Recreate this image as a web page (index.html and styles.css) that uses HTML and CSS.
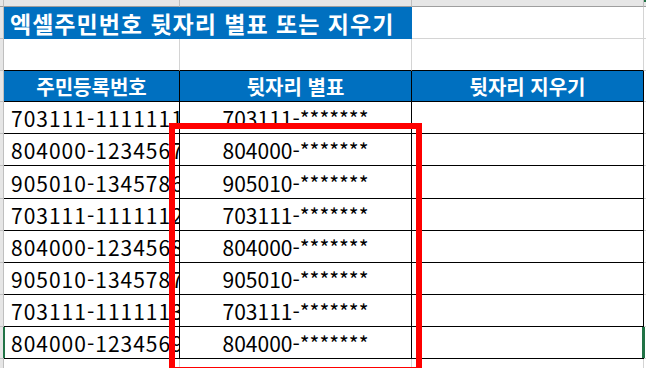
FILE: index.html
```html
<!DOCTYPE html>
<html lang="ko">
<head>
<meta charset="utf-8">
<title>엑셀주민번호 뒷자리 별표 또는 지우기</title>
<link rel="stylesheet" href="styles.css">
</head>
<body>
<div class="sheet">
  <div class="row colhead">
    <div class="rh"></div><div class="c"></div><div class="c"></div><div class="c"></div><div class="c edge"></div>
  </div>
  <div class="row title-row">
    <div class="rh"></div>
    <div class="c title">엑셀주민번호 뒷자리 별표 또는 지우기</div>
    <div class="c"></div><div class="c end"></div>
  </div>
  <div class="row blank">
    <div class="rh"></div><div class="c tb"></div><div class="c tb"></div><div class="c tb"></div><div class="c end"></div>
  </div>
  <div class="row head">
    <div class="rh"></div>
    <div class="c th">주민등록번호</div>
    <div class="c th">뒷자리 별표</div>
    <div class="c th">뒷자리 지우기</div>
    <div class="c end"></div>
  </div>
  <div class="row data"><div class="rh"></div><div class="c td id">703111-1111111</div><div class="c td mask">703111-*******</div><div class="c td"></div><div class="c end"></div></div>
  <div class="row data"><div class="rh"></div><div class="c td id">804000-1234567</div><div class="c td mask">804000-*******</div><div class="c td"></div><div class="c end"></div></div>
  <div class="row data tall"><div class="rh"></div><div class="c td id">905010-1345786</div><div class="c td mask">905010-*******</div><div class="c td"></div><div class="c end"></div></div>
  <div class="row data"><div class="rh"></div><div class="c td id">703111-1111112</div><div class="c td mask">703111-*******</div><div class="c td"></div><div class="c end"></div></div>
  <div class="row data"><div class="rh"></div><div class="c td id">804000-1234568</div><div class="c td mask">804000-*******</div><div class="c td"></div><div class="c end"></div></div>
  <div class="row data"><div class="rh"></div><div class="c td id">905010-1345787</div><div class="c td mask">905010-*******</div><div class="c td"></div><div class="c end"></div></div>
  <div class="row data"><div class="rh"></div><div class="c td id">703111-1111113</div><div class="c td mask">703111-*******</div><div class="c td"></div><div class="c end"></div></div>
  <div class="row data sel"><div class="rh"></div><div class="c td id">804000-1234569</div><div class="c td mask">804000-*******</div><div class="c td"></div><div class="c end"></div></div>
  <div class="row blank tail">
    <div class="rh"></div><div class="c"></div><div class="c"></div><div class="c"></div><div class="c end"></div>
  </div>
  <div class="highlight"></div>
</div>
</body>
</html>
```
FILE: styles.css
```css
* { box-sizing: border-box; }
html, body { margin: 0; padding: 0; background: #fff; }
body {
  width: 646px;
  height: 368px;
  overflow: hidden;
  font-family: "Noto Sans CJK KR", "Noto Sans", sans-serif;
  color: #000;
}
.sheet { position: relative; width: 646px; height: 368px; }
.row {
  display: grid;
  grid-template-columns: 4px 176px 232px 232px 2px;
  height: 32px;
}
.c {
  border-right: 1px solid #d4d4d4;
  border-bottom: 1px solid #d4d4d4;
  overflow: hidden;
  white-space: nowrap;
  display: flex;
  align-items: center;
  line-height: 1;
}
.c.end { border-right: none; }
.rh {
  background: #e6e6e6;
  border-right: 1px solid #bfbfbf;
  border-bottom: 1px solid #bfbfbf;
}

/* column header strip */
.colhead { height: 7px; }
.colhead .c { background: #e6e6e6; border-bottom: 1px solid #9e9e9e; border-right: 1px solid #bfbfbf; }
.colhead .rh { border-bottom: 1px solid #9e9e9e; }
.colhead .edge { border-right: none; border-top: 2px solid #217346; }

/* title row */
.title-row .title {
  grid-column: span 2;
  background: #0070c0;
  border-right: none;
  border-bottom: 1px solid #0070c0;
  color: #fff;
  font-weight: 700;
  font-size: 23px;
  letter-spacing: 1px;
  padding-left: 6px;
  padding-top: 1px;
}

/* blank row above header */
.blank .tb { border-bottom: 1px solid #000; }

/* header */
.head { height: 31px; }
.head .th {
  background: #0070c0;
  color: #fff;
  font-weight: 700;
  font-size: 20px;
  justify-content: center;
  border-right: 1px solid #000;
  border-bottom: 1px solid #000;
  padding-top: 1px;
}

/* data */
.data .td {
  border-right: 1px solid #000;
  border-bottom: 1px solid #000;
  font-size: 21px;
  padding-top: 2px;
}
.data.tall { height: 33px; }
.data .id { padding-left: 7px; letter-spacing: 1px; }
.data .mask { justify-content: center; }

.sel { position: relative; }
.sel::before, .sel::after {
  content: "";
  position: absolute;
  top: 0;
  bottom: 1px;
  background: #217346;
}
.sel::before { left: 3px; width: 2px; }
.sel::after { left: 642px; width: 3px; }

.tail { height: 12px; }

.highlight {
  position: absolute;
  left: 169px;
  top: 123px;
  width: 253px;
  height: 250px;
  border: 6px solid #ff0000;
}
```
